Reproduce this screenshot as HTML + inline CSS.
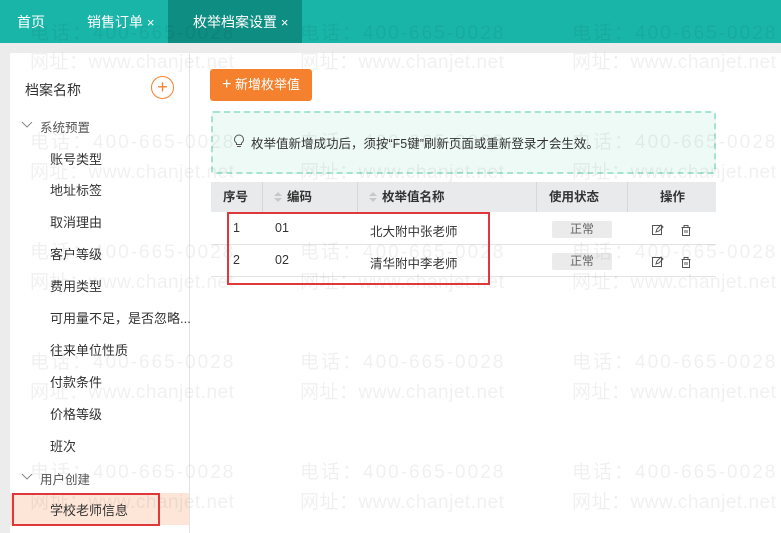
<!DOCTYPE html>
<html><head><meta charset="utf-8"><style>
*{margin:0;padding:0;box-sizing:border-box}
body{width:781px;height:533px;overflow:hidden;background:#fff;font-family:"Liberation Sans","Noto Sans CJK SC",sans-serif;font-size:13px;color:#333;position:relative}
.a{position:absolute}
.top{left:0;top:0;width:781px;height:43px;background:#1ab5a9}
.tab{top:0;height:43px;line-height:45px;color:#fff;font-size:14px}
.strip{left:0;top:43px;width:781px;height:10px;background:#ececec}
.lstrip{left:0;top:43px;width:10px;height:490px;background:#ececec}
.div{left:189px;top:53px;width:1px;height:480px;background:#e3e3e3}
.wm{color:rgba(0,0,0,0.06);font-size:19px;white-space:nowrap;z-index:5;pointer-events:none}
.p{letter-spacing:2px}.w{letter-spacing:0.5px}
.it{left:50px;font-size:13px;color:#333}
.th{top:182px;height:30px;line-height:30px;font-weight:bold;font-size:12.5px;color:#333}
.sort{display:inline-block;width:8px;height:10px;vertical-align:-1px;margin-right:5px;position:relative}
.sort:before{content:"";position:absolute;top:0;left:0;border:4px solid transparent;border-bottom:4px solid #c8c8c8;border-top:0}
.sort:after{content:"";position:absolute;top:6px;left:0;border:4px solid transparent;border-top:4px solid #c8c8c8;border-bottom:0}
.td{font-size:12.5px;color:#333}
.st{width:60px;height:17px;background:#ebebeb;border-radius:2px;color:#666;text-align:center;line-height:17px;font-size:12px}
</style></head><body>
<div class="a top"></div>
<div class="a" style="left:168px;top:0;width:134px;height:43px;background:#0e8d82"></div>
<div class="a tab" style="left:17px">首页</div>
<div class="a tab" style="left:87px">销售订单 <span style="font-size:13px">×</span></div>
<div class="a tab" style="left:193px">枚举档案设置 <span style="font-size:13px">×</span></div>
<div class="a strip"></div><div class="a lstrip"></div><div class="a div"></div>

<div class="a" style="left:25px;top:80px;font-size:14px;color:#333">档案名称</div>
<div class="a" style="left:151px;top:76px;width:23px;height:23px;border:1px solid #f5812f;border-radius:50%;color:#f5812f;text-align:center;line-height:20px;font-size:18px">+</div>
<svg class="a" style="left:21px;top:121px" width="12" height="8"><path d="M1 1l5 5 5-5" fill="none" stroke="#888" stroke-width="1"/></svg>
<div class="a" style="left:40px;top:117px;font-size:12.5px;color:#555">系统预置</div>
<div class="a it" style="top:149px">账号类型</div>
<div class="a it" style="top:180px">地址标签</div>
<div class="a it" style="top:212px">取消理由</div>
<div class="a it" style="top:244px">客户等级</div>
<div class="a it" style="top:276px">费用类型</div>
<div class="a it" style="top:308px">可用量不足，是否忽略...</div>
<div class="a it" style="top:340px">往来单位性质</div>
<div class="a it" style="top:372px">付款条件</div>
<div class="a it" style="top:404px">价格等级</div>
<div class="a it" style="top:436px">班次</div>
<svg class="a" style="left:21px;top:473px" width="12" height="8"><path d="M1 1l5 5 5-5" fill="none" stroke="#888" stroke-width="1"/></svg>
<div class="a" style="left:40px;top:469px;font-size:12.5px;color:#555">用户创建</div>
<div class="a" style="left:10px;top:493px;width:179px;height:32px;background:#fde6d8"></div>
<div class="a it" style="top:500px">学校老师信息</div>
<div class="a" style="left:12px;top:493px;width:148px;height:33px;border:2px solid #e0383a;z-index:6"></div>

<div class="a" style="left:210px;top:69px;width:102px;height:32px;background:#f5812f;border-radius:3px;color:#fff;font-size:13px;line-height:32px;text-align:center"><span style="font-size:16px">+</span> 新增枚举值</div>
<div class="a" style="left:211px;top:111px;width:505px;height:63px;border:2px dashed #a6e3d0;background:#eefaf6;border-radius:3px"></div>
<svg class="a" style="left:233px;top:134px" width="12" height="14" fill="none" stroke="#555" stroke-width="1"><path d="M3.5 9C2 8 1.5 6.5 1.5 5.5a4.5 4.5 0 0 1 9 0c0 1-.5 2.5-2 3.5v1.5h-5z M4 12.5h4"/></svg>
<div class="a" style="left:251px;top:133px;font-size:12.5px;color:#333">枚举值新增成功后，须按“F5键”刷新页面或重新登录才会生效。</div>

<div class="a" style="left:211px;top:182px;width:505px;height:30px;background:#e8eaeb"></div>
<div class="a" style="left:262px;top:182px;width:1px;height:30px;background:#d5d7d8"></div>
<div class="a" style="left:357px;top:182px;width:1px;height:30px;background:#d5d7d8"></div>
<div class="a" style="left:536px;top:182px;width:1px;height:30px;background:#d5d7d8"></div>
<div class="a" style="left:627px;top:182px;width:1px;height:30px;background:#d5d7d8"></div>
<div class="a th" style="left:223px">序号</div>
<div class="a th" style="left:274px"><span class="sort"></span>编码</div>
<div class="a th" style="left:369px"><span class="sort"></span>枚举值名称</div>
<div class="a th" style="left:549px">使用状态</div>
<div class="a th" style="left:660px">操作</div>
<div class="a" style="left:211px;top:244px;width:505px;height:1px;background:#e3e3e3"></div>
<div class="a" style="left:211px;top:276px;width:505px;height:1px;background:#e3e3e3"></div>
<div class="a td" style="left:233px;top:221px">1</div>
<div class="a td" style="left:275px;top:221px">01</div>
<div class="a td" style="left:370px;top:221px">北大附中张老师</div>
<div class="a st" style="left:552px;top:221px">正常</div>
<div class="a td" style="left:233px;top:253px">2</div>
<div class="a td" style="left:275px;top:253px">02</div>
<div class="a td" style="left:370px;top:253px">清华附中李老师</div>
<div class="a st" style="left:552px;top:253px">正常</div>
<svg class="a" style="left:650px;top:222px" width="44" height="48" viewBox="0 0 44 48" fill="none" stroke="#555" stroke-width="1">
<g id="r"><rect x="2.5" y="3.5" width="9" height="9"/><path d="M6 10l1-3 4-4 2 2-4 4z"/><path d="M31.5 5.5h9M34 5.5v-2h4v2M32.5 5.5v8h7v-8M35 8v3M37 8v3"/></g>
<use href="#r" y="32"/></svg>
<div class="a" style="left:227px;top:212px;width:263px;height:73px;border:2px solid #e0383a;z-index:6"></div>

<div class="a wm p" style="left:30px;top:18px">电话：400-665-0028</div><div class="a wm p" style="left:300px;top:18px">电话：400-665-0028</div><div class="a wm p" style="left:572px;top:18px">电话：400-665-0028</div>
<div class="a wm w" style="left:30px;top:47px">网址：www.chanjet.net</div><div class="a wm w" style="left:300px;top:47px">网址：www.chanjet.net</div><div class="a wm w" style="left:572px;top:47px">网址：www.chanjet.net</div>
<div class="a wm p" style="left:30px;top:127px">电话：400-665-0028</div><div class="a wm p" style="left:300px;top:127px">电话：400-665-0028</div><div class="a wm p" style="left:572px;top:127px">电话：400-665-0028</div>
<div class="a wm w" style="left:30px;top:157px">网址：www.chanjet.net</div><div class="a wm w" style="left:300px;top:157px">网址：www.chanjet.net</div><div class="a wm w" style="left:572px;top:157px">网址：www.chanjet.net</div>
<div class="a wm p" style="left:30px;top:237px">电话：400-665-0028</div><div class="a wm p" style="left:300px;top:237px">电话：400-665-0028</div><div class="a wm p" style="left:572px;top:237px">电话：400-665-0028</div>
<div class="a wm w" style="left:30px;top:267px">网址：www.chanjet.net</div><div class="a wm w" style="left:300px;top:267px">网址：www.chanjet.net</div><div class="a wm w" style="left:572px;top:267px">网址：www.chanjet.net</div>
<div class="a wm p" style="left:30px;top:347px">电话：400-665-0028</div><div class="a wm p" style="left:300px;top:347px">电话：400-665-0028</div><div class="a wm p" style="left:572px;top:347px">电话：400-665-0028</div>
<div class="a wm w" style="left:30px;top:377px">网址：www.chanjet.net</div><div class="a wm w" style="left:300px;top:377px">网址：www.chanjet.net</div><div class="a wm w" style="left:572px;top:377px">网址：www.chanjet.net</div>
<div class="a wm p" style="left:30px;top:457px">电话：400-665-0028</div><div class="a wm p" style="left:300px;top:457px">电话：400-665-0028</div><div class="a wm p" style="left:572px;top:457px">电话：400-665-0028</div>
<div class="a wm w" style="left:30px;top:487px">网址：www.chanjet.net</div><div class="a wm w" style="left:300px;top:487px">网址：www.chanjet.net</div><div class="a wm w" style="left:572px;top:487px">网址：www.chanjet.net</div>
</body></html>
